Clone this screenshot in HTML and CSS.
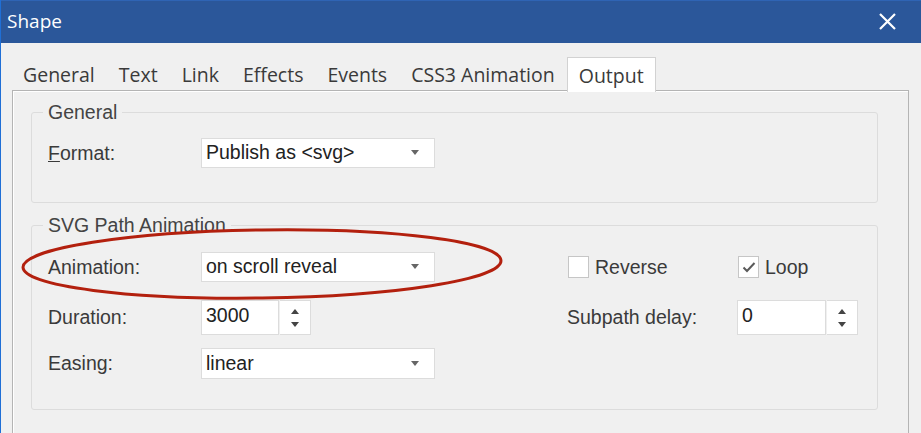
FILE: index.html
```html
<!DOCTYPE html>
<html lang="en">
<head>
    <meta charset="UTF-8">
    <meta name="viewport" content="width=device-width, initial-scale=1.0">
    <title>Shape</title>
    <link rel="stylesheet" href="styles.css">
</head>
<body>
    <div class="window">
        <div class="titlebar">
            <span class="title">Shape</span>
            <svg class="close" width="17" height="17" viewBox="0 0 17 17">
                <path d="M1 1 L16 16 M16 1 L1 16" stroke="#fff" stroke-width="2.2" fill="none"/>
            </svg>
        </div>

        <div class="tabs">
            <div class="tab">General</div>
            <div class="tab">Text</div>
            <div class="tab">Link</div>
            <div class="tab">Effects</div>
            <div class="tab">Events</div>
            <div class="tab">CSS3 Animation</div>
            <div class="tab active">Output</div>
        </div>

        <div class="panel">
            <fieldset class="group group-general">
                <legend>General</legend>
                <div class="row">
                    <label class="label"><u>F</u>ormat:</label>
                    <div class="cell">
                        <div class="select"><span>Publish as &lt;svg&gt;</span><i class="arrow"></i></div>
                    </div>
                </div>
            </fieldset>

            <fieldset class="group group-anim">
                <legend>SVG Path Animation</legend>
                <div class="row">
                    <label class="label">Animation:</label>
                    <div class="cell">
                        <div class="select"><span>on scroll reveal</span><i class="arrow"></i></div>
                    </div>
                    <div class="cell-right">
                        <span class="check"><span class="box"></span>Reverse</span>
                    </div>
                    <span class="check"><span class="box">
                        <svg width="16" height="14" viewBox="0 0 16 14"><path d="M2.5 7.5 L6 11 L13.5 3" stroke="#5a5a5a" stroke-width="2" fill="none"/></svg>
                    </span>Loop</span>
                </div>
                <div class="row row-spin">
                    <label class="label">Duration:</label>
                    <div class="cell">
                        <div class="spin">
                            <div class="spin-input">3000</div>
                            <div class="spin-btns"><i class="up"></i><i class="down"></i></div>
                        </div>
                    </div>
                    <div class="cell-right label">Subpath delay:</div>
                    <div class="spin spin-wide">
                        <div class="spin-input">0</div>
                        <div class="spin-btns"><i class="up"></i><i class="down"></i></div>
                    </div>
                </div>
                <div class="row row-last">
                    <label class="label">Easing:</label>
                    <div class="cell">
                        <div class="select"><span>linear</span><i class="arrow"></i></div>
                    </div>
                </div>
            </fieldset>
        </div>

        <!-- red marker drawn over the Animation row -->
        <svg class="marker" width="490" height="80" viewBox="0 0 490 80">
            <ellipse cx="241" cy="38" rx="239" ry="34" transform="rotate(-0.8 241 38)" stroke="#b3200e" stroke-width="3" fill="none"/>
        </svg>
    </div>
</body>
</html>
```

FILE: styles.css
```css
body {
    margin: 0;
    background-color: #f0f0f0;
    font-family: "Liberation Sans", Arial, sans-serif;
    overflow: hidden;
}
.window {
    position: relative;
    width: 921px;
    height: 433px;
    border-left: 1px solid #1f6fd6;
    box-sizing: border-box;
    background-color: #f0f0f0;
}
.titlebar {
    height: 43px;
    background-color: #2b579a;
    border-top: 1px solid #2f64b4;
    box-sizing: border-box;
    display: flex;
    align-items: center;
    justify-content: space-between;
    padding: 0 25px 2px 6px;
}
.title {
    font-family: "Open Sans", sans-serif;
    font-size: 19px;
    color: #fff;
}
.tabs {
    display: flex;
    margin-top: 14px;
    padding-left: 10px;
    height: 33px;
    font-family: "Open Sans", sans-serif;
    font-size: 19.5px;
    color: #3a3a3a;
}
.tab {
    padding: 0 12px;
    line-height: 35px;
}
.tab.active {
    position: relative;
    z-index: 1;
    background-color: #fff;
    border: 1px solid #d2d2d2;
    border-bottom: none;
    padding: 0 11px;
    height: 34px;
    line-height: 35px;
}
.panel {
    margin-left: 11px;
    width: 897px;
    height: 360px;
    border: 1px solid #b4b4b4;
    box-shadow: inset 1px 1px 0 #fff;
    box-sizing: border-box;
    padding: 11px 30px 0 18px;
}
.group {
    margin: 0;
    padding: 0 0 0 16px;
    border: 1px solid #dcdcdc;
    border-radius: 3px;
    font-size: 19.5px;
    color: #3a3a3a;
}
.group legend {
    margin-left: -5px;
    padding: 0 5px;
    line-height: 20px;
    color: #444;
}
.group-general {
    padding-top: 16px;
    padding-bottom: 34px;
}
.group-anim {
    margin-top: 12px;
    padding-top: 17px;
    padding-bottom: 30px;
}
.row {
    display: flex;
    align-items: center;
    height: 30px;
}
.row-spin {
    margin-top: 18px;
    height: 35px;
}
.row-last {
    margin-top: 13px;
    height: 31px;
}
.label {
    width: 153px;
    color: #3a3a3a;
}
.cell {
    width: 366px;
    height: 100%;
}
.cell-right {
    width: 170px;
}
.select {
    width: 234px;
    height: 100%;
    box-sizing: border-box;
    background-color: #fff;
    border: 1px solid #dcdcdc;
    display: flex;
    align-items: center;
    justify-content: space-between;
    padding: 0 15px 1px 4px;
    color: #222;
}
.arrow {
    width: 0;
    height: 0;
    border-left: 4.5px solid transparent;
    border-right: 4.5px solid transparent;
    border-top: 5px solid #666;
}
.spin {
    display: flex;
    height: 100%;
    width: 110px;
}
.spin-wide {
    width: 121px;
}
.spin-input {
    flex: 1;
    background-color: #fff;
    border: 1px solid #dcdcdc;
    padding: 0 4px;
    line-height: 28px;
    color: #222;
}
.spin-btns {
    width: 31px;
    margin-left: 1px;
    background-color: #fff;
    border: 1px solid #dcdcdc;
    border-left: none;
    box-sizing: border-box;
    display: flex;
    flex-direction: column;
    align-items: center;
    justify-content: center;
    gap: 8px;
}
.spin-btns i {
    width: 0;
    height: 0;
    border-left: 4px solid transparent;
    border-right: 4px solid transparent;
}
.spin-btns .up {
    border-bottom: 5px solid #444;
}
.spin-btns .down {
    border-top: 5px solid #444;
}
.check {
    display: flex;
    align-items: center;
    color: #3a3a3a;
}
.check .box {
    width: 21px;
    height: 22px;
    box-sizing: border-box;
    background-color: #fff;
    border: 1px solid #c6c6c6;
    margin: 0 6px 0 1px;
    display: flex;
    align-items: center;
    justify-content: center;
}
.marker {
    position: absolute;
    left: 20px;
    top: 226px;
}
```
